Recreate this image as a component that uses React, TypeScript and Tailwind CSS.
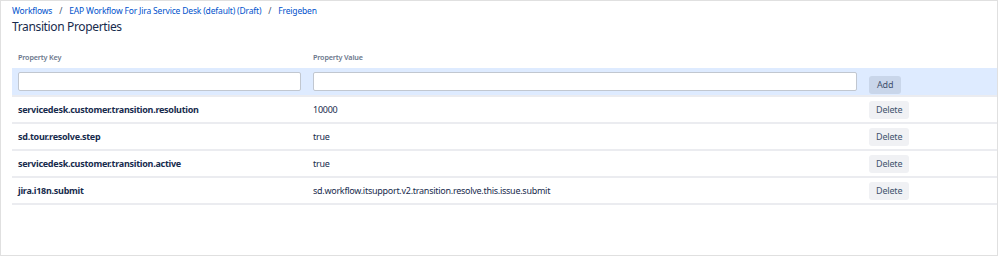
import React from 'react';

const rows = [
  { key: 'servicedesk.customer.transition.resolution', value: '10000' },
  { key: 'sd.tour.resolve.step', value: 'true' },
  { key: 'servicedesk.customer.transition.active', value: 'true' },
  { key: 'jira.i18n.submit', value: 'sd.workflow.itsupport.v2.transition.resolve.this.issue.submit' },
];

export default function App() {
  return (
    <div className="w-[998px] h-[256px] border border-[#e0e0e0] bg-white text-[#172b4d] font-['Noto_Sans',sans-serif] overflow-hidden">
      {/* Breadcrumbs */}
      <div className="flex items-center gap-[7px] pl-[11px] pt-[3px] h-[15px] text-[8.5px] tracking-[-0.02em] leading-[15px] text-[#0052cc]">
        <span>Workflows</span>
        <span className="text-[#42526e]">/</span>
        <span>EAP Workflow For Jira Service Desk (default) (Draft)</span>
        <span className="text-[#42526e]">/</span>
        <span>Freigeben</span>
      </div>
      <h1 className="pl-[11px] mt-[1px] text-[12px] tracking-[-0.03em] leading-[19px] font-normal">Transition Properties</h1>

      {/* Table */}
      <div className="ml-[11px] mt-[11px]">
        <div className="flex h-[21px] items-center text-[7.2px] tracking-[-0.02em] font-semibold text-[#6b778c]">
          <div className="w-[295px] px-[6px]">Property Key</div>
          <div className="w-[556px] px-[6px]">Property Value</div>
        </div>
        <div className="flex h-[29px] items-center bg-[#deebff] border-b-2 border-[#ebecf0]">
          <div className="w-[295px] px-[6px]">
            <input className="block w-full h-[19px] bg-white border border-[#c1c7d0] rounded-[2px] outline-none" />
          </div>
          <div className="w-[556px] px-[6px]">
            <input className="block w-full h-[19px] bg-white border border-[#c1c7d0] rounded-[2px] outline-none" />
          </div>
          <div className="px-[6px]">
            <button className="h-[18px] px-[8px] rounded-[3px] bg-[#c9d6ea] text-[9px] tracking-[-0.02em] text-[#42526e] leading-[18px]">Add</button>
          </div>
        </div>
        {rows.map((r) => (
          <div key={r.key} className="flex h-[27px] items-center border-b-2 border-[#ebecf0] text-[9px] tracking-[-0.03em]">
            <div className="w-[295px] px-[6px] font-bold">{r.key}</div>
            <div className="w-[556px] px-[6px]">{r.value}</div>
            <div className="px-[6px]">
              <button className="h-[18px] px-[7px] rounded-[3px] bg-[#f0f1f4] text-[9px] tracking-[-0.02em] text-[#42526e] leading-[18px]">Delete</button>
            </div>
          </div>
        ))}
      </div>
    </div>
  );
}
